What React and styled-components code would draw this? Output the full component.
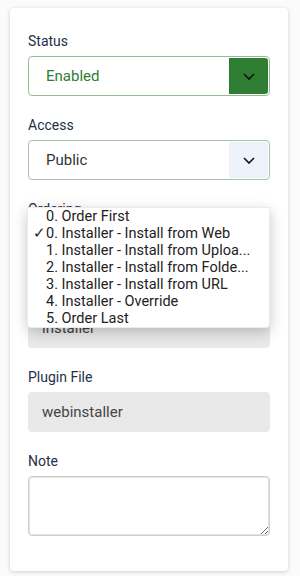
import React from 'react';
import styled, { createGlobalStyle } from 'styled-components';

const GlobalStyle = createGlobalStyle`
  body {
    margin: 0;
    padding: 8px 12px 5px 10px;
    background: #fbfbfb;
    font-family: Roboto, "Liberation Sans", sans-serif;
  }
`;

const Card = styled.div`
  background: #fff;
  border-radius: 4px;
  box-shadow: 0 1px 4px rgba(0, 0, 0, 0.18);
  padding: 23px 18px 33px;
  height: 563px;
  box-sizing: border-box;
`;

const Group = styled.div`
  position: relative;
  margin-bottom: 19px;
`;

const Label = styled.div`
  font-size: 14px;
  line-height: 20px;
  color: #243047;
  margin-bottom: 5px;
`;

const SelectBox = styled.div`
  display: flex;
  align-items: stretch;
  height: 40px;
  box-sizing: border-box;
  border: 1px solid ${(p) => p.$border};
  border-radius: 4px;
  padding: 1px;
  background: #fff;
`;

const SelectText = styled.div`
  flex: 1;
  display: flex;
  align-items: center;
  padding-left: 16px;
  font-size: 15px;
  color: ${(p) => p.$color};
`;

const Chevron = styled.div`
  width: 39px;
  display: flex;
  align-items: center;
  justify-content: center;
  background: ${(p) => p.$bg};
  border-radius: 0 3px 3px 0;
`;

const ReadOnly = styled.div`
  height: 40px;
  display: flex;
  align-items: center;
  padding-left: 14px;
  background: #e9e9e9;
  border-radius: 4px;
  font-size: 15px;
  color: #444;
`;

const Note = styled.textarea`
  display: block;
  width: 100%;
  height: 60px;
  box-sizing: border-box;
  border: 1px solid #cfcfcf;
  border-radius: 4px;
  box-shadow: inset 0 0 0 1px #e4e4e4;
  resize: vertical;
  font-family: inherit;
`;

const Menu = styled.ul`
  position: absolute;
  top: 8px;
  left: -1px;
  right: 0;
  margin: 0;
  padding: 0;
  list-style: none;
  background: #fff;
  border: 1px solid rgba(0, 0, 0, 0.08);
  border-radius: 0 0 4px 4px;
  box-shadow: 0 4px 14px rgba(0, 0, 0, 0.22);
  z-index: 2;
`;

const Item = styled.li`
  position: relative;
  height: 17px;
  line-height: 17px;
  padding-left: 18px;
  font-size: 14.5px;
  color: #222;
  white-space: nowrap;
`;

const Check = styled.span`
  position: absolute;
  left: 5px;
  top: 0;
`;

const ChevronIcon = ({ color }) => (
  <svg width="12" height="7" viewBox="0 0 12 7">
    <path d="M1 1l5 5 5-5" fill="none" stroke={color} strokeWidth="1.6" />
  </svg>
);

const Select = ({ value, color, border, bg }) => (
  <SelectBox $border={border}>
    <SelectText $color={color}>{value}</SelectText>
    <Chevron $bg={bg}>
      <ChevronIcon color="#111" />
    </Chevron>
  </SelectBox>
);

const options = [
  '0. Order First',
  '0. Installer - Install from Web',
  '1. Installer - Install from Uploa...',
  '2. Installer - Install from Folde...',
  '3. Installer - Install from URL',
  '4. Installer - Override',
  '5. Order Last'
];

const App = () => (
  <>
    <GlobalStyle />
    <Card>
      <Group>
        <Label>Status</Label>
        <Select value="Enabled" color="#2e7d32" border="#98bb95" bg="#2e7d32" />
      </Group>
      <Group>
        <Label>Access</Label>
        <Select value="Public" color="#333" border="#a9c1a6" bg="#eef2fa" />
      </Group>
      <Group>
        <Label>Ordering</Label>
        <Select value="" color="#333" border="#8fabe2" bg="#eef2fa" />
        <Menu>
          {options.map((o, i) => (
            <Item key={o}>
              {i === 1 && <Check>✓</Check>}
              {o}
            </Item>
          ))}
        </Menu>
      </Group>
      <Group>
        <Label>Plugin Type</Label>
        <ReadOnly>installer</ReadOnly>
      </Group>
      <Group>
        <Label>Plugin File</Label>
        <ReadOnly>webinstaller</ReadOnly>
      </Group>
      <Group>
        <Label>Note</Label>
        <Note />
      </Group>
    </Card>
  </>
);

export default App;
